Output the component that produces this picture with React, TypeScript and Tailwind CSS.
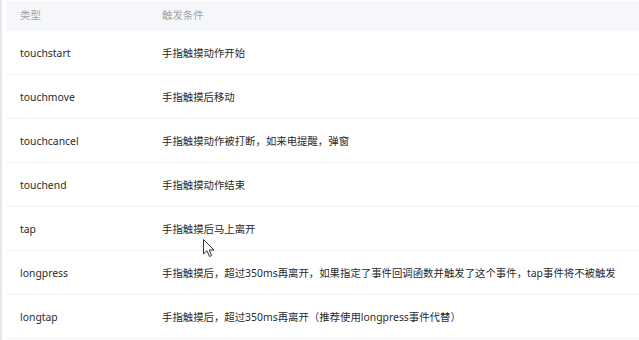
import React from "react";

const rows: [string, string][] = [
  ["touchstart", "手指触摸动作开始"],
  ["touchmove", "手指触摸后移动"],
  ["touchcancel", "手指触摸动作被打断，如来电提醒，弹窗"],
  ["touchend", "手指触摸动作结束"],
  ["tap", "手指触摸后马上离开"],
  ["longpress", "手指触摸后，超过350ms再离开，如果指定了事件回调函数并触发了这个事件，tap事件将不被触发"],
  ["longtap", "手指触摸后，超过350ms再离开（推荐使用longpress事件代替）"],
];

export default function App() {
  return (
    <div
      className="relative w-[639px] h-[340px] bg-white flex overflow-hidden"
      style={{ fontFamily: "'Noto Sans', 'Noto Sans CJK SC', sans-serif" }}
    >
      <div className="w-[2px] bg-[#e6e6ee] shrink-0" />
      <div className="flex-1 min-w-0 pl-[4px] pt-[1px]">
        <div className="flex h-[30px] items-center bg-[#f6f7fb] text-[10.4px] text-[#a0a3a8]">
          <div className="w-[156px] shrink-0 pl-[14px]">类型</div>
          <div className="flex-1 min-w-0">触发条件</div>
        </div>
        {rows.map(([a, b]) => (
          <div
            key={a}
            className="flex h-[44px] items-center border-b border-[#eff0f3] text-[10.4px] text-[#2a2a2a]"
          >
            <div className="w-[156px] shrink-0 pl-[14px] pt-[2px]">{a}</div>
            <div className="flex-1 min-w-0 whitespace-nowrap pt-[2px]">{b}</div>
          </div>
        ))}
      </div>
      <svg
        className="absolute left-[203px] top-[239px]"
        width="12"
        height="19"
        viewBox="0 0 12 19"
      >
        <path
          d="M0.5 0.5 L0.5 15 L4 11.8 L6.5 17.5 L8.6 16.6 L6.2 11 L11 11 Z"
          fill="white"
          stroke="#333"
          strokeWidth="1"
          strokeLinejoin="round"
        />
      </svg>
    </div>
  );
}
